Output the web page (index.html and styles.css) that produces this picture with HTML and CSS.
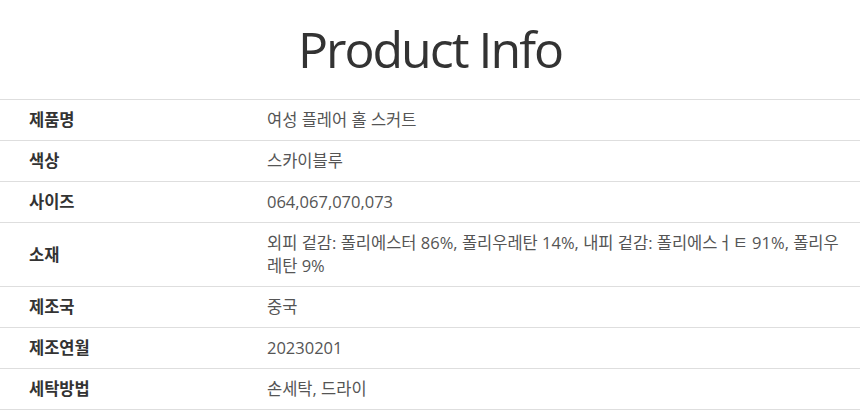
FILE: index.html
```html
<!DOCTYPE html>
<html lang="ko">
<head>
<meta charset="utf-8">
<link rel="stylesheet" href="styles.css">
</head>
<body>
<div class="page">
  <h1 class="title">Product Info</h1>
  <table class="info">
    <tbody>
      <tr><th>제품명</th><td>여성 플레어 홀 스커트</td></tr>
      <tr><th>색상</th><td>스카이블루</td></tr>
      <tr><th>사이즈</th><td>064,067,070,073</td></tr>
      <tr><th>소재</th><td>외피 겉감: 폴리에스터 86%, 폴리우레탄 14%, 내피 겉감: 폴리에스ㅓㅌ 91%, 폴리우레탄 9%</td></tr>
      <tr><th>제조국</th><td>중국</td></tr>
      <tr><th>제조연월</th><td>20230201</td></tr>
      <tr><th>세탁방법</th><td>손세탁, 드라이</td></tr>
    </tbody>
  </table>
</div>
</body>
</html>
```
FILE: styles.css
```css
html, body {
  margin: 0;
  padding: 0;
  background: #fff;
}
body {
  font-family: "Open Sans", "Noto Sans CJK KR", sans-serif;
  color: #333;
}
.page {
  width: 860px;
}
.title {
  margin: 0;
  height: 99px;
  display: flex;
  align-items: center;
  justify-content: center;
  font-size: 50px;
  font-weight: 400;
  color: #333;
  letter-spacing: -2px;
  padding-bottom: 2px;
  box-sizing: border-box;
}
.info {
  width: 100%;
  border-collapse: collapse;
  border-top: 1px solid #dedede;
}
.info tr {
  border-bottom: 1px solid #dedede;
}
.info th, .info td {
  padding: 8px 0 9px;
  line-height: 23px;
  text-align: left;
  vertical-align: middle;
}
.info th {
  width: 238px;
  padding-left: 29px;
  font-size: 16.5px;
  font-weight: 600;
  color: #333;
}
.info td {
  padding-right: 10px;
  font-size: 16.5px;
  color: #555;
  font-weight: 400;
}
```
